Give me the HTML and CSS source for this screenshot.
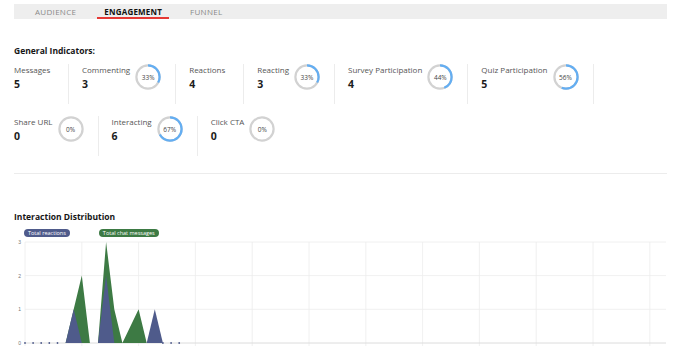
FILE: index.html
```html
<!DOCTYPE html>
<html lang="en">
<head>
    <meta charset="UTF-8">
    <meta name="viewport" content="width=device-width, initial-scale=1.0">
    <title>Engagement</title>
    <link rel="stylesheet" href="styles.css">
</head>
<body>
    <div class="page">
        <nav class="tabs">
            <a class="tab">AUDIENCE</a>
            <a class="tab active">ENGAGEMENT</a>
            <a class="tab">FUNNEL</a>
        </nav>

        <section class="indicators">
            <h2 class="section-title">General Indicators:</h2>

            <div class="stat-row">
                <div class="stat plain">
                    <div class="stat-text"><span class="stat-label">Messages</span><span class="stat-value">5</span></div>
                </div>
                <div class="stat">
                    <div class="stat-text"><span class="stat-label">Commenting</span><span class="stat-value">3</span></div>
                    <div class="donut">
                        <svg viewBox="0 0 26 26"><circle class="ring" cx="13" cy="13" r="11.6"></circle><circle class="arc" cx="13" cy="13" r="11.6" pathLength="100" stroke-dasharray="33 100"></circle></svg>
                        <span>33%</span>
                    </div>
                </div>
                <div class="stat plain">
                    <div class="stat-text"><span class="stat-label">Reactions</span><span class="stat-value">4</span></div>
                </div>
                <div class="stat">
                    <div class="stat-text"><span class="stat-label">Reacting</span><span class="stat-value">3</span></div>
                    <div class="donut">
                        <svg viewBox="0 0 26 26"><circle class="ring" cx="13" cy="13" r="11.6"></circle><circle class="arc" cx="13" cy="13" r="11.6" pathLength="100" stroke-dasharray="33 100"></circle></svg>
                        <span>33%</span>
                    </div>
                </div>
                <div class="stat">
                    <div class="stat-text"><span class="stat-label">Survey Participation</span><span class="stat-value">4</span></div>
                    <div class="donut">
                        <svg viewBox="0 0 26 26"><circle class="ring" cx="13" cy="13" r="11.6"></circle><circle class="arc" cx="13" cy="13" r="11.6" pathLength="100" stroke-dasharray="44 100"></circle></svg>
                        <span>44%</span>
                    </div>
                </div>
                <div class="stat">
                    <div class="stat-text"><span class="stat-label">Quiz Participation</span><span class="stat-value">5</span></div>
                    <div class="donut">
                        <svg viewBox="0 0 26 26"><circle class="ring" cx="13" cy="13" r="11.6"></circle><circle class="arc" cx="13" cy="13" r="11.6" pathLength="100" stroke-dasharray="56 100"></circle></svg>
                        <span>56%</span>
                    </div>
                </div>
            </div>

            <div class="stat-row second">
                <div class="stat">
                    <div class="stat-text"><span class="stat-label">Share URL</span><span class="stat-value">0</span></div>
                    <div class="donut">
                        <svg viewBox="0 0 26 26"><circle class="ring" cx="13" cy="13" r="11.6"></circle></svg>
                        <span>0%</span>
                    </div>
                </div>
                <div class="stat">
                    <div class="stat-text"><span class="stat-label">Interacting</span><span class="stat-value">6</span></div>
                    <div class="donut">
                        <svg viewBox="0 0 26 26"><circle class="ring" cx="13" cy="13" r="11.6"></circle><circle class="arc" cx="13" cy="13" r="11.6" pathLength="100" stroke-dasharray="67 100"></circle></svg>
                        <span>67%</span>
                    </div>
                </div>
                <div class="stat">
                    <div class="stat-text"><span class="stat-label">Click CTA</span><span class="stat-value">0</span></div>
                    <div class="donut">
                        <svg viewBox="0 0 26 26"><circle class="ring" cx="13" cy="13" r="11.6"></circle></svg>
                        <span>0%</span>
                    </div>
                </div>
            </div>
        </section>

        <section class="distribution">
            <h2 class="section-title">Interaction Distribution</h2>
            <div class="legend">
                <span class="pill reactions">Total reactions</span>
                <span class="pill messages">Total chat messages</span>
            </div>

            <svg class="chart" width="653" height="116" viewBox="0 0 653 116">
                <!-- grid -->
                <g class="grid">
                    <line x1="11" y1="4" x2="652" y2="4"></line>
                    <line x1="11" y1="37.6" x2="652" y2="37.6"></line>
                    <line x1="11" y1="71.3" x2="652" y2="71.3"></line>
                    <line x1="11" y1="4" x2="11" y2="108"></line>
                    <line x1="67.8" y1="4" x2="67.8" y2="108"></line>
                    <line x1="124.6" y1="4" x2="124.6" y2="108"></line>
                    <line x1="181.4" y1="4" x2="181.4" y2="108"></line>
                    <line x1="238.2" y1="4" x2="238.2" y2="108"></line>
                    <line x1="295" y1="4" x2="295" y2="108"></line>
                    <line x1="351.8" y1="4" x2="351.8" y2="108"></line>
                    <line x1="408.6" y1="4" x2="408.6" y2="108"></line>
                    <line x1="465.4" y1="4" x2="465.4" y2="108"></line>
                    <line x1="522.2" y1="4" x2="522.2" y2="108"></line>
                    <line x1="579" y1="4" x2="579" y2="108"></line>
                    <line x1="635.8" y1="4" x2="635.8" y2="108"></line>
                </g>
                <line class="baseline" x1="11" y1="105" x2="652" y2="105"></line>
                <g class="y-labels">
                    <text x="7" y="6">3</text>
                    <text x="7" y="39.6">2</text>
                    <text x="7" y="73.3">1</text>
                    <text x="7" y="107">0</text>
                </g>

                <!-- series -->
                <polygon class="series-messages" points="11,105 51.6,105 59.7,71.3 67.8,37.6 75.9,105 84,105 92.1,4 100.3,71.3 108.4,105 124.6,71.3 132.7,105 165.2,105"></polygon>
                <polygon class="series-reactions" points="51.6,105 59.7,71.3 67.8,105"></polygon>
                <polygon class="series-reactions" points="84,105 92.1,37.6 100.3,105"></polygon>
                <polygon class="series-reactions" points="132.7,105 140.8,71.3 148.9,105"></polygon>
                <g class="dots">
                    <circle cx="11" cy="105" r="0.9"></circle>
                    <circle cx="19.1" cy="105" r="0.9"></circle>
                    <circle cx="27.2" cy="105" r="0.9"></circle>
                    <circle cx="35.3" cy="105" r="0.9"></circle>
                    <circle cx="43.5" cy="105" r="0.9"></circle>
                    <circle cx="148.9" cy="105" r="0.9"></circle>
                    <circle cx="157.1" cy="105" r="0.9"></circle>
                    <circle cx="165.2" cy="105" r="0.9"></circle>
                </g>
            </svg>
        </section>
    </div>
</body>
</html>
```

FILE: styles.css
```css
:root {
    --color-text: #1c1c1c;
    --color-label: #555555;
    --color-muted: #8a8a8a;
    --color-line: #ececec;
    --color-tabs: #eeeeee;
    --color-accent: #e53935;
    --color-ring: #d2d2d2;
    --color-arc: #64aef2;
    --color-reactions: #4f5b8b;
    --color-messages: #3d7a44;
}

* {
    margin: 0;
    padding: 0;
    box-sizing: border-box;
}

body {
    font-family: 'Open Sans', 'Liberation Sans', sans-serif;
    color: var(--color-text);
    background: #ffffff;
}

.page {
    padding: 4px 21px 0 14px;
}

/* Tabs */
.tabs {
    display: flex;
    gap: 14px;
    height: 15px;
    padding-left: 14px;
    background-color: var(--color-tabs);
}

.tab {
    display: flex;
    align-items: center;
    padding: 1px 7px 0;
    font-size: 8px;
    letter-spacing: 0.3px;
    color: var(--color-muted);
    border-bottom: 2px solid transparent;
}

.tab.active {
    color: #111111;
    font-weight: 700;
    letter-spacing: 0.2px;
    border-bottom-color: var(--color-accent);
}

/* Headings */
.section-title {
    font-size: 8.5px;
    line-height: 10px;
    font-weight: 700;
    color: #161616;
}

.indicators {
    padding-top: 27px;
}

.indicators .section-title {
    margin-bottom: 8px;
}

/* Stat cards */
.stat-row {
    display: flex;
    height: 40px;
}

.stat-row.second {
    margin-top: 12px;
}

.stat {
    display: flex;
    align-items: flex-start;
    gap: 5px;
    padding: 0 14px 0 13px;
    border-right: 1px solid var(--color-line);
}

.stat:first-child {
    padding-left: 0;
}

.stat-row.second .stat:last-child {
    border-right: none;
}

.stat-text {
    display: flex;
    flex-direction: column;
    padding-top: 1px;
}

.stat.plain .stat-text {
    min-width: 40px;
}

.stat-label {
    font-size: 8px;
    line-height: 10px;
    color: var(--color-label);
    white-space: nowrap;
}

.stat-value {
    margin-top: 3px;
    font-size: 10.5px;
    line-height: 12px;
    font-weight: 700;
}

.donut {
    position: relative;
    width: 26px;
    height: 26px;
    flex-shrink: 0;
}

.donut svg {
    display: block;
    width: 26px;
    height: 26px;
    transform: rotate(-90deg);
}

.donut circle {
    fill: none;
    stroke-width: 2.2;
}

.donut .ring {
    stroke: var(--color-ring);
}

.donut .arc {
    stroke: var(--color-arc);
}

.donut span {
    position: absolute;
    inset: 0;
    display: flex;
    align-items: center;
    justify-content: center;
    font-size: 6.5px;
    color: #444444;
}

/* Distribution chart */
.distribution {
    margin-top: 17px;
    padding-top: 38px;
    border-top: 1px solid var(--color-line);
}

.legend {
    display: flex;
    gap: 29px;
    margin: 7px 0 1px 10px;
}

.pill {
    height: 8px;
    padding: 0 4px;
    border-radius: 4px;
    font-size: 5.5px;
    line-height: 8px;
    color: #ffffff;
    white-space: nowrap;
}

.pill.reactions {
    background-color: var(--color-reactions);
}

.pill.messages {
    background-color: var(--color-messages);
}

.chart {
    display: block;
}

.chart .grid line {
    stroke: var(--color-line);
    stroke-width: 0.8;
}

.chart .baseline {
    stroke: #dcdcdc;
    stroke-width: 1;
}

.chart .y-labels text {
    font-family: 'Liberation Sans', sans-serif;
    font-size: 5px;
    fill: #777777;
    text-anchor: end;
}

.series-messages {
    fill: var(--color-messages);
}

.series-reactions {
    fill: var(--color-reactions);
}

.dots circle {
    fill: var(--color-reactions);
}
```
